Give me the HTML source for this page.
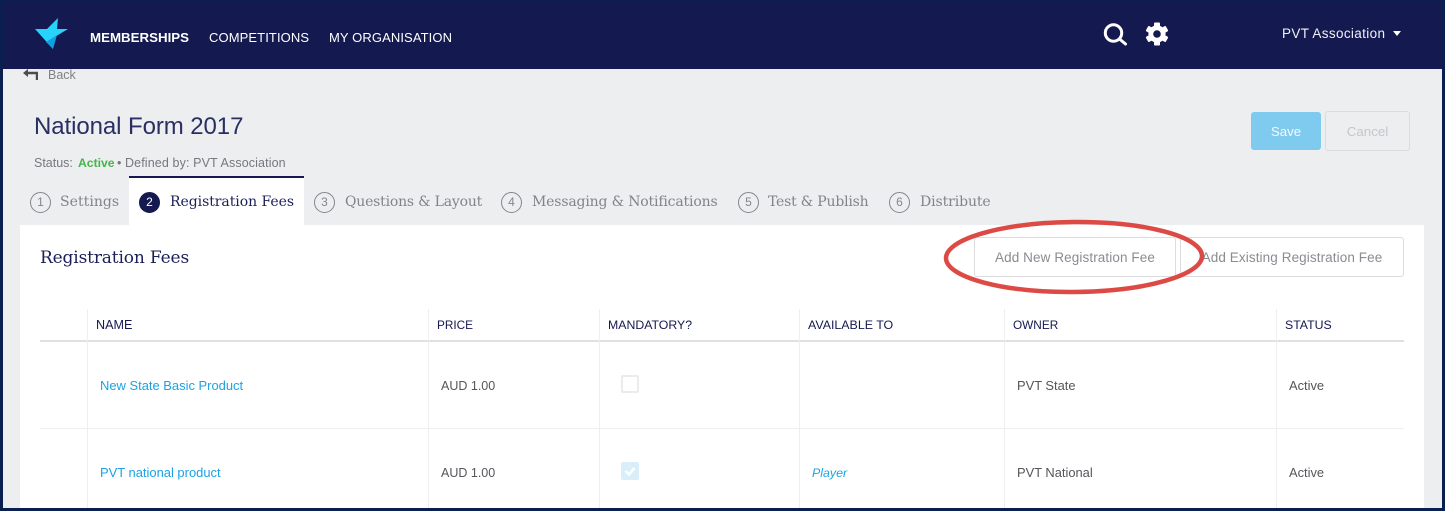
<!DOCTYPE html>
<html><head><meta charset="utf-8"><style>
html,body{margin:0;padding:0;width:1445px;height:511px;overflow:hidden;background:#0a1f50}
*{box-sizing:border-box}
body{position:relative;font-family:"Liberation Sans",sans-serif}
.a{position:absolute;white-space:nowrap;line-height:16px}
.s{font-family:"DejaVu Serif",serif;font-size:14px;color:#83838b;line-height:20px;letter-spacing:-.2px}
.c{position:absolute;width:21px;height:21px;border:1px solid #85858b;border-radius:50%;font-size:12px;color:#85858b;text-align:center;line-height:19px}
.h{font-size:12.3px;color:#15194f}
.t{font-size:12.9px;color:#55555a}
.l{font-size:12.95px;color:#1ba3e4}
.v{position:absolute;width:1px;background:#eeeef0}
.b{position:absolute;height:40px;background:#fff;border:1px solid #dcdcde;border-radius:3px;font-size:13.5px;letter-spacing:.1px;color:#8b8b92;text-align:center;line-height:39px;white-space:nowrap}
</style></head><body>
<div style="position:absolute;left:3px;top:2px;width:1439px;height:67px;background:#141950"></div>
<div style="position:absolute;left:3px;top:69px;width:1439px;height:439px;background:#edeef0"></div>
<div style="position:absolute;left:20px;top:225px;width:1404px;height:283px;background:#fff"></div>

<svg style="position:absolute;left:34px;top:16px" width="36" height="34" viewBox="0 0 36 34"><path d="M1 13L13 13L24 2L23 13L34 13L19 22L19 33Z" fill="#27d3fb"/><path d="M12 26L23 19L19 33Z" fill="#119fe4"/></svg>

<div class="a" style="left:90px;top:30px;font-size:13.3px;font-weight:bold;color:#fff">MEMBERSHIPS</div>
<div class="a" style="left:209px;top:30px;font-size:13px;color:#fff;letter-spacing:.1px">COMPETITIONS</div>
<div class="a" style="left:329px;top:30px;font-size:13px;color:#fff;letter-spacing:.1px">MY ORGANISATION</div>

<svg style="position:absolute;left:1103px;top:22px" width="25" height="25" viewBox="0 0 25 25"><circle cx="10.5" cy="11" r="8.2" fill="none" stroke="#fff" stroke-width="3"/><path d="M16.5 17L22.5 22" stroke="#fff" stroke-width="3" stroke-linecap="round"/></svg>
<svg style="position:absolute;left:1145px;top:22px" width="24" height="24" viewBox="0 0 24 24"><g fill="#fff"><circle cx="12" cy="12" r="8.6"/><rect x="9" y="0.5" width="6" height="23" rx="1"/><rect x="9" y="0.5" width="6" height="23" rx="1" transform="rotate(60 12 12)"/><rect x="9" y="0.5" width="6" height="23" rx="1" transform="rotate(120 12 12)"/></g><circle cx="12" cy="12" r="3.8" fill="#141950"/></svg>

<div class="a" style="left:1282px;top:26px;font-size:13.5px;color:#f2f2f6;letter-spacing:.35px">PVT Association</div>
<div style="position:absolute;left:1393px;top:31px;border-left:4px solid transparent;border-right:4px solid transparent;border-top:5px solid #fff"></div>

<svg style="position:absolute;left:22px;top:69px" width="16" height="12" viewBox="0 0 16 12"><path d="M15 11V4H4" fill="none" stroke="#4b4b50" stroke-width="2.4"/><path d="M1 4L6 0V8Z" fill="#4b4b50"/></svg>
<div class="a" style="left:48px;top:67px;font-size:12.5px;color:#808086">Back</div>

<div class="a" style="left:34px;top:113px;font-size:24px;line-height:28px;color:#2a2f62;letter-spacing:-.08px">National Form 2017</div>
<div class="a" style="left:34px;top:155px;font-size:12.5px;color:#77777d">Status:</div>
<div class="a" style="left:78px;top:155px;font-size:12.2px;font-weight:bold;color:#45b649">Active</div>
<div class="a" style="left:117px;top:155px;font-size:12.5px;color:#77777d">•</div>
<div class="a" style="left:125px;top:155px;font-size:12.5px;color:#77777d;letter-spacing:.12px">Defined by: PVT Association</div>

<div style="position:absolute;left:1251px;top:112px;width:70px;height:38px;background:#7fcbef;border-radius:3px;color:#f4f9fd;font-size:13.3px;text-align:center;line-height:39px">Save</div>
<div style="position:absolute;left:1325px;top:111px;width:85px;height:40px;border:1px solid #dcdcde;border-radius:3px;color:#c6c6ca;font-size:13.3px;text-align:center;line-height:39px">Cancel</div>

<div style="position:absolute;left:129px;top:176px;width:175px;height:49px;background:#fff;border-top:2px solid #141950"></div>
<div class="c" style="left:30px;top:192px">1</div><div class="a s" style="left:60px;top:192px;letter-spacing:.05px">Settings</div>
<div class="c" style="left:139px;top:192px;background:#141950;border-color:#141950;color:#fff">2</div><div class="a s" style="left:170px;top:192px;color:#1b1f57;letter-spacing:-.05px">Registration Fees</div>
<div class="c" style="left:314px;top:192px">3</div><div class="a s" style="left:345px;top:192px">Questions &amp; Layout</div>
<div class="c" style="left:501px;top:192px">4</div><div class="a s" style="left:532px;top:192px;letter-spacing:-.16px">Messaging &amp; Notifications</div>
<div class="c" style="left:738px;top:192px">5</div><div class="a s" style="left:768px;top:192px">Test &amp; Publish</div>
<div class="c" style="left:889px;top:192px">6</div><div class="a s" style="left:920px;top:192px;letter-spacing:-.1px">Distribute</div>

<div class="a" style="left:40px;top:247px;font-family:'DejaVu Serif',serif;font-size:17px;line-height:22px;color:#1b1f57;letter-spacing:-.15px">Registration Fees</div>

<div class="b" style="left:974px;top:237px;width:202px">Add New Registration Fee</div>
<div class="b" style="left:1180px;top:237px;width:224px">Add Existing Registration Fee</div>

<svg style="position:absolute;left:942px;top:215px" width="270" height="85" viewBox="0 0 270 85"><ellipse cx="132" cy="42" rx="128" ry="35" fill="none" stroke="#dd4a45" stroke-width="4.5" transform="rotate(-0.5 132 42)"/></svg>

<div style="position:absolute;left:40px;top:340px;width:1364px;height:2px;background:#e0e0e2"></div>
<div style="position:absolute;left:40px;top:428px;width:1364px;height:1px;background:#eeeef0"></div>

<div class="v" style="left:87px;top:309px;height:199px"></div>
<div class="v" style="left:428px;top:309px;height:199px"></div>
<div class="v" style="left:599px;top:309px;height:199px"></div>
<div class="v" style="left:799px;top:309px;height:199px"></div>
<div class="v" style="left:1004px;top:309px;height:199px"></div>
<div class="v" style="left:1276px;top:309px;height:199px"></div>

<div class="a h" style="left:96px;top:317px;font-size:12.6px">NAME</div>
<div class="a h" style="left:437px;top:317px;font-size:11.8px">PRICE</div>
<div class="a h" style="left:608px;top:317px;font-size:12.3px">MANDATORY?</div>
<div class="a h" style="left:808px;top:317px;font-size:12.4px">AVAILABLE TO</div>
<div class="a h" style="left:1013px;top:317px;font-size:11.8px">OWNER</div>
<div class="a h" style="left:1285px;top:317px;font-size:12.3px">STATUS</div>

<div class="a l" style="left:100px;top:378px">New State Basic Product</div>
<div class="a t" style="left:441px;top:378px;font-size:12.5px">AUD 1.00</div>
<div style="position:absolute;left:621px;top:375px;width:18px;height:18px;border:2px solid #ebebec;border-radius:2px;background:#fff"></div>
<div class="a t" style="left:1017px;top:378px">PVT State</div>
<div class="a t" style="left:1289px;top:378px">Active</div>

<div class="a l" style="left:100px;top:465px">PVT national product</div>
<div class="a t" style="left:441px;top:465px;font-size:12.5px">AUD 1.00</div>
<div style="position:absolute;left:621px;top:462px;width:18px;height:18px;background:#d9eefa;border-radius:2px"></div>
<svg style="position:absolute;left:621px;top:462px" width="18" height="18" viewBox="0 0 18 18"><path d="M4.5 9L8 12.5L13.5 6" fill="none" stroke="#fff" stroke-width="2.6"/></svg>
<div class="a l" style="left:812px;top:465px;font-style:italic;font-size:12.4px">Player</div>
<div class="a t" style="left:1017px;top:465px">PVT National</div>
<div class="a t" style="left:1289px;top:465px">Active</div>
</body></html>
